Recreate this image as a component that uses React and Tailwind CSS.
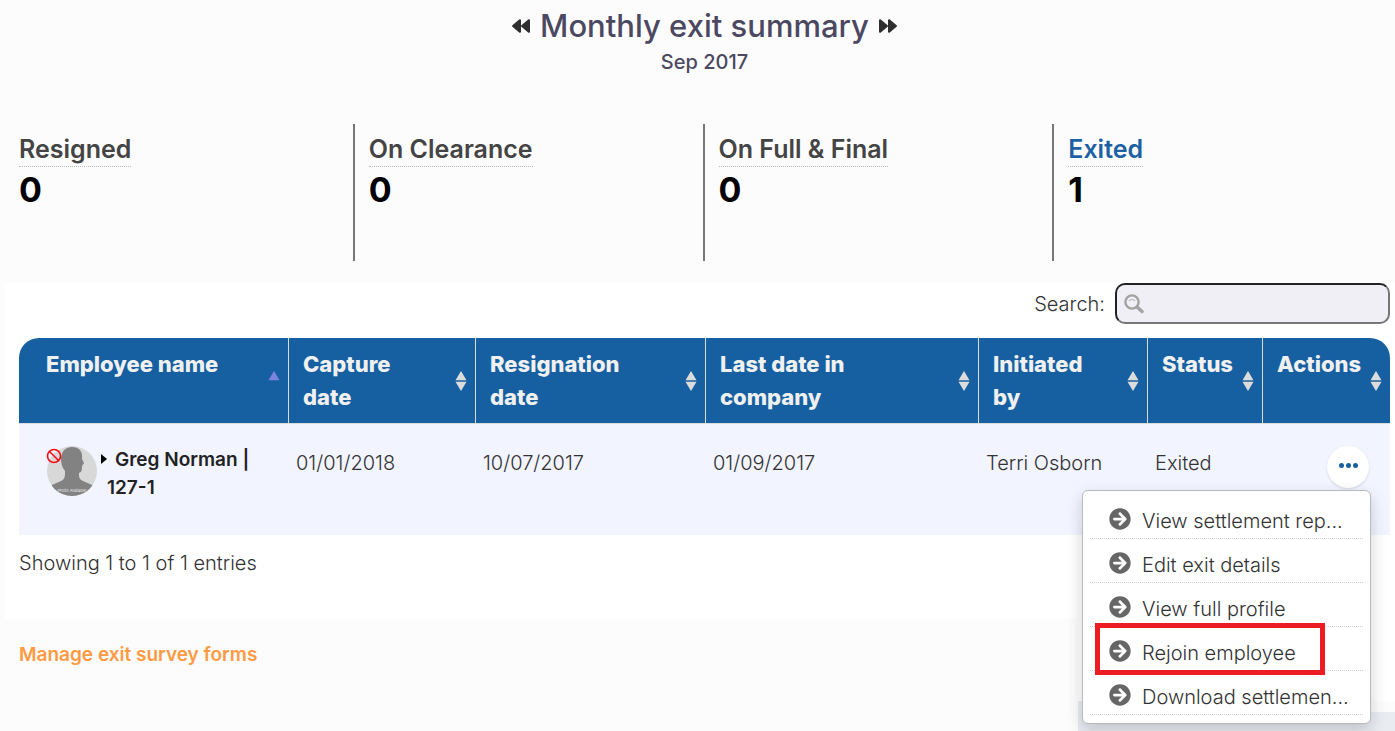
import { FaArrowCircleRight, FaBackward, FaForward } from "react-icons/fa";

const STATS = [
  { label: "Resigned", value: 0 },
  { label: "On Clearance", value: 0 },
  { label: "On Full & Final", value: 0 },
  { label: "Exited", value: 1, active: true },
];

const COLUMNS = [
  { label: "Employee name", width: "w-[270px]", sorted: true },
  { label: "Capture\ndate", width: "w-[187px]" },
  { label: "Resignation\ndate", width: "w-[230px]" },
  { label: "Last date in\ncompany", width: "w-[273px]" },
  { label: "Initiated\nby", width: "w-[169px]" },
  { label: "Status", width: "w-[115px]" },
  { label: "Actions", width: "w-[127px]" },
];

const ACTIONS = [
  { label: "View settlement rep..." },
  { label: "Edit exit details" },
  { label: "View full profile" },
  { label: "Rejoin employee", highlighted: true },
  { label: "Download settlemen..." },
];

function SortIcon({ sorted }) {
  return (
    <svg width="12" height="20" viewBox="0 0 12 20" className="shrink-0" aria-hidden="true">
      <path d="M6 0 L11.5 9.2 H0.5 Z" fill={sorted ? "#7f83e0" : "#dcdcdc"} />
      {!sorted && <path d="M0.5 10.8 H11.5 L6 20 Z" fill="#dcdcdc" />}
    </svg>
  );
}

function Avatar() {
  return (
    <svg width="50" height="50" viewBox="0 0 50 50" className="shrink-0 overflow-visible" aria-hidden="true">
      <defs>
        <clipPath id="avatar-clip">
          <circle cx="25" cy="25" r="25" />
        </clipPath>
      </defs>
      <g clipPath="url(#avatar-clip)">
        <rect width="50" height="50" fill="#d8d8d8" />
        <path
          d="M25 1 C18 1 14 6 14 13 C14 19 16 22 18 25 C18 31 18 33 14 35 L5 39 L0 50 H50 L45 39 L36 35 C32 33 32 31 32 27 C35 26 35 23 35 20 L37 17 L35 13 C36 5 32 1 25 1 Z"
          fill="#828282"
        />
        <text x="25" y="46" fontSize="4" textAnchor="middle" fill="#ffffff">
          Photo Available
        </text>
      </g>
      <circle cx="7" cy="10" r="6.5" fill="none" stroke="#fb0d14" strokeWidth="1.6" />
      <path d="M2.5 5.5 L11.5 14.5" stroke="#fb0d14" strokeWidth="1.6" />
    </svg>
  );
}

function SearchIcon() {
  return (
    <svg width="20" height="20" viewBox="0 0 20 20" className="shrink-0" aria-hidden="true">
      <path d="M12.5 12.5 L18 17.5" stroke="#a3a3a3" strokeWidth="3.4" strokeLinecap="round" />
      <circle cx="8" cy="8" r="6.6" fill="#f0f0f5" stroke="#a3a3a3" strokeWidth="2.4" />
      <path d="M5 7 Q8 3.6 11 7" fill="none" stroke="#bdbdbd" strokeWidth="1.2" />
    </svg>
  );
}

function Header() {
  return (
    <header className="flex flex-col items-center pt-2 pl-1 text-[#4b4861]">
      <div className="flex items-center gap-[10px]">
        <button type="button" aria-label="Previous month" className="text-[#2f2f2f]">
          <FaBackward size={18} />
        </button>
        <h1 className="text-[31px] leading-9 font-medium">Monthly exit summary</h1>
        <button type="button" aria-label="Next month" className="text-[#2f2f2f]">
          <FaForward size={18} />
        </button>
      </div>
      <p className="mt-1 text-[20px] leading-7 font-medium">Sep 2017</p>
    </header>
  );
}

function Stats() {
  return (
    <section className="mt-12 grid grid-cols-4">
      {STATS.map((stat, i) => (
        <div
          key={stat.label}
          className={`h-[137px] border-l-2 pt-2 pl-[14px] ${i === 0 ? "border-transparent" : "border-[#777777]"}`}
        >
          <a
            href="#"
            className={`inline-block border-b border-dotted border-[#bbbbbb] text-[25px] leading-[34px] font-semibold ${
              stat.active ? "text-[#1c61a3]" : "text-[#444444]"
            }`}
          >
            {stat.label}
          </a>
          <p className="text-[34px] leading-[46px] font-bold text-black">{stat.value}</p>
        </div>
      ))}
    </section>
  );
}

function ActionsMenu() {
  return (
    <ul className="absolute top-[66px] right-[19px] z-10 w-[289px] rounded-md border border-[#b8bac0] bg-white px-[7px] pt-1 pb-2 shadow-[0_6px_16px_rgba(0,0,0,0.18)]">
      {ACTIONS.map((action) => (
        <li key={action.label} className="relative border-b border-dotted border-[#cfcfcf]">
          <button type="button" className="flex h-[43px] w-full items-center gap-[11px] pt-2 pl-[19px] text-left">
            <FaArrowCircleRight size={22} className="mb-1 shrink-0 text-[#666666]" />
            <span className="whitespace-nowrap">{action.label}</span>
          </button>
          {action.highlighted && (
            <span className="pointer-events-none absolute -top-1 left-[5px] h-[52px] w-[230px] border-[5px] border-[#ed1c24]" />
          )}
        </li>
      ))}
    </ul>
  );
}

function ExitTable() {
  return (
    <table className="mt-[14px] w-full table-fixed border-separate border-spacing-0 text-left">
      <thead>
        <tr>
          {COLUMNS.map((col) => (
            <th
              key={col.label}
              scope="col"
              className={`${col.width} h-[86px] border-r border-b border-[#dcdcdc] bg-[#1660a1] p-0 align-top text-[#f0f0f0] first:rounded-tl-[20px] last:rounded-tr-[20px] last:border-r-0`}
            >
              <button
                type="button"
                className={`flex h-[85px] w-full items-center justify-between pr-2 text-left ${col.sorted ? "pl-[27px]" : "pl-[14px]"}`}
              >
                <span className="self-start pt-[10px] text-[22px] leading-[33px] font-extrabold whitespace-pre-line">
                  {col.label}
                </span>
                <SortIcon sorted={col.sorted} />
              </button>
            </th>
          ))}
        </tr>
      </thead>
      <tbody>
        <tr className="h-[111px] bg-[#f2f4ff] align-top">
          <td className="pt-[22px] pl-[28px]">
            <div className="flex gap-[4px]">
              <Avatar />
              <div className="flex">
                <svg width="6" height="10" viewBox="0 0 6 10" className="mt-2 shrink-0" aria-hidden="true">
                  <path d="M0 0 L6 5 L0 10 Z" fill="#000000" />
                </svg>
                <a href="#" className="indent-2 text-[19px] leading-7 font-semibold text-[#222222]">
                  Greg Norman |<br />
                  <span className="inline-block indent-0">127-1</span>
                </a>
              </div>
            </div>
          </td>
          <td className="pt-[25px] pl-[7px]">01/01/2018</td>
          <td className="pt-[25px] pl-[7px]">10/07/2017</td>
          <td className="pt-[25px] pl-[7px]">01/09/2017</td>
          <td className="pt-[25px] pl-[7px]">Terri Osborn</td>
          <td className="pt-[25px] pl-[7px]">Exited</td>
          <td className="relative pt-[22px] pr-[21px]">
            <button
              type="button"
              aria-label="Row actions"
              className="ml-auto flex size-[42px] items-center justify-center gap-[2px] rounded-full bg-white pb-1 shadow"
            >
              <span className="size-[5px] rounded-full bg-[#1660a1]" />
              <span className="size-[5px] rounded-full bg-[#1660a1]" />
              <span className="size-[5px] rounded-full bg-[#1660a1]" />
            </button>
            <ActionsMenu />
          </td>
        </tr>
      </tbody>
    </table>
  );
}

export default function App() {
  return (
    <div className="flex min-h-screen flex-col overflow-hidden bg-[#fcfcfc] font-[Inter,sans-serif] text-[20px] leading-7 font-light text-[#333333]">
      <div className="-mr-[7px] ml-[3px]">
        <Header />
        <Stats />
      </div>

      <main className="mt-[21px] ml-[5px] h-[336px] bg-white pt-[1px] pr-[5px] pl-[14px]">
        <div className="flex items-center justify-end gap-[10px]">
          <label htmlFor="search">Search:</label>
          <div className="flex h-[41px] w-[275px] items-center rounded-[10px] border-2 border-t-[#222222] border-r-[#777777] border-b-[#777777] border-l-[#222222] bg-[#efeff5] px-[7px]">
            <SearchIcon />
            <input id="search" type="text" className="ml-2 w-full bg-transparent outline-none" />
          </div>
        </div>
        <ExitTable />
        <p className="mt-[14px]">Showing 1 to 1 of 1 entries</p>
      </main>

      <footer className="flex flex-1 justify-between pl-[19px]">
        <a href="#" className="mt-[23px] text-[19px] font-semibold text-[#ff9a42]">
          Manage exit survey forms
        </a>
        <div className="flex w-[317px] bg-white">
          <div className="mt-[83px] w-5 bg-[#e9ecf1]" />
          <div className="mt-[83px] flex-1 border-t-[11px] border-[#fcfcfc] bg-[#e9ecf1]" />
        </div>
      </footer>
    </div>
  );
}
